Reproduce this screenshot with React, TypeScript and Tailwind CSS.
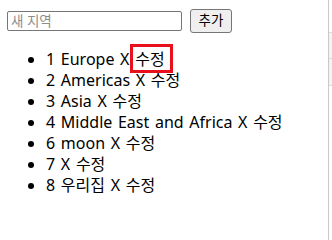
import { useState } from "react";

const regions = [
  { id: 1, name: "Europe" },
  { id: 2, name: "Americas" },
  { id: 3, name: "Asia" },
  { id: 4, name: "Middle East and Africa" },
  { id: 6, name: "moon" },
  { id: 7, name: "" },
  { id: 8, name: "우리집" },
];

export default function App() {
  const [name, setName] = useState("");

  return (
    <div className="flex h-[240px] w-[332px] overflow-hidden bg-white text-black [font-family:'Noto_Sans','Noto_Sans_CJK_KR',sans-serif]">
      <div className="min-w-0 flex-1 px-[7px] pt-[9px]">
        {/* 입력 + 추가 */}
        <div className="flex items-center gap-[8px]">
          <input
            value={name}
            onChange={(e) => setName(e.target.value)}
            placeholder="새 지역"
            className="h-[20px] w-[175px] rounded-[2px] border border-[#767676] px-[3px] text-[13.5px] leading-none placeholder:text-[#8d8d8d]"
          />
          <button className="h-[24px] w-[42px] rounded-[3px] border border-[#767676] bg-[#efefef] text-[13.5px] leading-none">
            추가
          </button>
        </div>

        <ul className="mt-[16px] list-disc pl-[39px] text-[16px] leading-[21px] [word-spacing:1.5px]">
          {regions.map((r, i) => (
            <li key={r.id} className="whitespace-nowrap">
              {r.id} {r.name ? `${r.name} ` : ""}X{" "}
              <span className="relative inline-block">
                수정
                {i === 0 && (
                  <span className="absolute -top-[5px] -bottom-[3px] -left-[5px] -right-[8px] border-[3px] border-[#e8101a]" />
                )}
              </span>
            </li>
          ))}
        </ul>
      </div>

      {/* 오른쪽 가장자리 */}
      <div className="flex w-[4px] shrink-0 flex-col border-l border-[#c8c8d0] pt-[32px]">
        <div className="h-[27px] border-y border-[#dcdcdc] bg-[#f3f3f3]" />
        <div className="h-[27px] border-b border-[#dcdcdc] bg-[#f3f3f3]" />
      </div>
    </div>
  );
}
